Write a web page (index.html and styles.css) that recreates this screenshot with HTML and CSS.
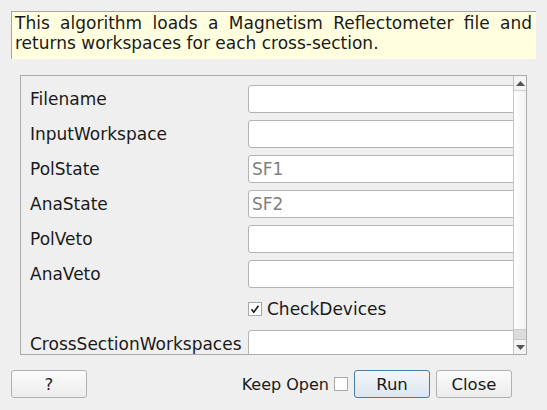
FILE: index.html
```html
<!DOCTYPE html>
<html>
<head>
<meta charset="utf-8">
<link rel="stylesheet" href="styles.css">
</head>
<body>
<div class="dialog">
  <div class="desc">This algorithm loads a Magnetism Reflectometer file and returns workspaces for each cross-section.</div>
  <div class="scroll">
    <div class="viewport">
      <div class="form">
        <div class="label">Filename</div><div class="input"></div>
        <div class="label">InputWorkspace</div><div class="input"></div>
        <div class="label">PolState</div><div class="input placeholder">SF1</div>
        <div class="label">AnaState</div><div class="input placeholder">SF2</div>
        <div class="label">PolVeto</div><div class="input"></div>
        <div class="label">AnaVeto</div><div class="input"></div>
        <div class="label"></div>
        <div class="check-row">
          <span class="checkbox"><svg width="12" height="12" viewBox="0 0 12 12"><path d="M2.5 6.2 L4.8 9.2 L9.5 2.8" fill="none" stroke="#1a1a1a" stroke-width="1.6"/></svg></span>
          <span>CheckDevices</span>
        </div>
        <div class="label">CrossSectionWorkspaces</div><div class="input"></div>
      </div>
    </div>
    <div class="scrollbar">
      <div class="arrow up"><svg width="9" height="5" viewBox="0 0 9 5"><path d="M0 5 L4.5 0 L9 5 Z" fill="#555"/></svg></div>
      <div class="handle"></div>
      <div class="track"></div>
      <div class="arrow down"><svg width="9" height="5" viewBox="0 0 9 5"><path d="M0 0 L4.5 5 L9 0 Z" fill="#555"/></svg></div>
    </div>
  </div>
  <div class="footer">
    <button class="btn help">?</button>
    <div class="spacer"></div>
    <span class="keep">Keep Open</span>
    <span class="checkbox small"></span>
    <button class="btn run">Run</button>
    <button class="btn close">Close</button>
  </div>
</div>
</body>
</html>
```
FILE: styles.css
```css
html, body {
  margin: 0;
  padding: 0;
  background: #efefef;
}
body {
  font-family: "DejaVu Sans", sans-serif;
  font-size: 17px;
  color: #1a1a1a;
  width: 547px;
  height: 410px;
  overflow: hidden;
}
.dialog {
  padding: 11px 11px 0 11px;
  display: flex;
  flex-direction: column;
}
.desc {
  box-sizing: border-box;
  height: 48px;
  width: 525px;
  background: #ffffe0;
  border-top: 1px solid #a6a6a6;
  border-left: 1px solid #a6a6a6;
  padding: 1px 4px 0 3px;
  line-height: 20px;
  text-align: justify;
}
.scroll {
  box-sizing: border-box;
  margin-top: 16px;
  margin-left: 9px;
  width: 507px;
  height: 280px;
  border: 1px solid #ababab;
  display: flex;
}
.viewport {
  flex: 1;
  overflow: hidden;
  padding: 9px 0 0 9px;
}
.form {
  display: grid;
  grid-template-columns: 218px 270px;
  grid-auto-rows: 28px;
  row-gap: 7px;
  align-items: center;
}
.form .check-row {
  height: 26px;
}
.label {
  white-space: nowrap;
}
.input {
  box-sizing: border-box;
  height: 28px;
  background: #fff;
  border: 1px solid #b4b4b4;
  border-radius: 3px;
  padding-left: 3px;
  line-height: 26px;
}
.placeholder {
  color: #7f7f7f;
}
.check-row {
  display: flex;
  align-items: center;
  gap: 5px;
}
.checkbox {
  box-sizing: border-box;
  width: 14px;
  height: 14px;
  background: #fff;
  border: 1px solid #a9a9a9;
  display: inline-flex;
  align-items: center;
  justify-content: center;
}
.scrollbar {
  box-sizing: border-box;
  width: 13px;
  border-left: 1px solid #c4c4c4;
  display: flex;
  flex-direction: column;
  background: #f7f7f7;
}
.arrow {
  height: 14px;
  display: flex;
  align-items: center;
  justify-content: center;
  background: #f4f4f4;
}
.arrow.up {
  border-bottom: 1px solid #d0d0d0;
}
.arrow.down {
  border-top: 1px solid #c8c8c8;
}
.handle {
  flex: 1;
  background: linear-gradient(to right, #ffffff, #f2f2f2);
}
.track {
  height: 9px;
  background: #dcdcdc;
  border-top: 1px solid #cfcfcf;
}
.footer {
  margin-top: 15px;
  display: flex;
  align-items: center;
  width: 501px;
  font-size: 16px;
}
.spacer {
  flex: 1;
}
.btn {
  box-sizing: border-box;
  height: 28px;
  font-family: "DejaVu Sans", sans-serif;
  font-size: 16.5px;
  color: #1a1a1a;
  border: 1px solid #b0b0b0;
  border-radius: 3px;
  background: linear-gradient(to bottom, #fbfbfb, #ececec);
  padding: 0;
}
.help {
  width: 76px;
}
.keep {
  margin-right: 5px;
}
.checkbox.small {
  margin-right: 6px;
}
.run {
  width: 76px;
  border-color: #4a7ba6;
  background: linear-gradient(to bottom, #f2f6fa, #dde6ee);
  margin-right: 6px;
}
.close {
  width: 76px;
}
```
